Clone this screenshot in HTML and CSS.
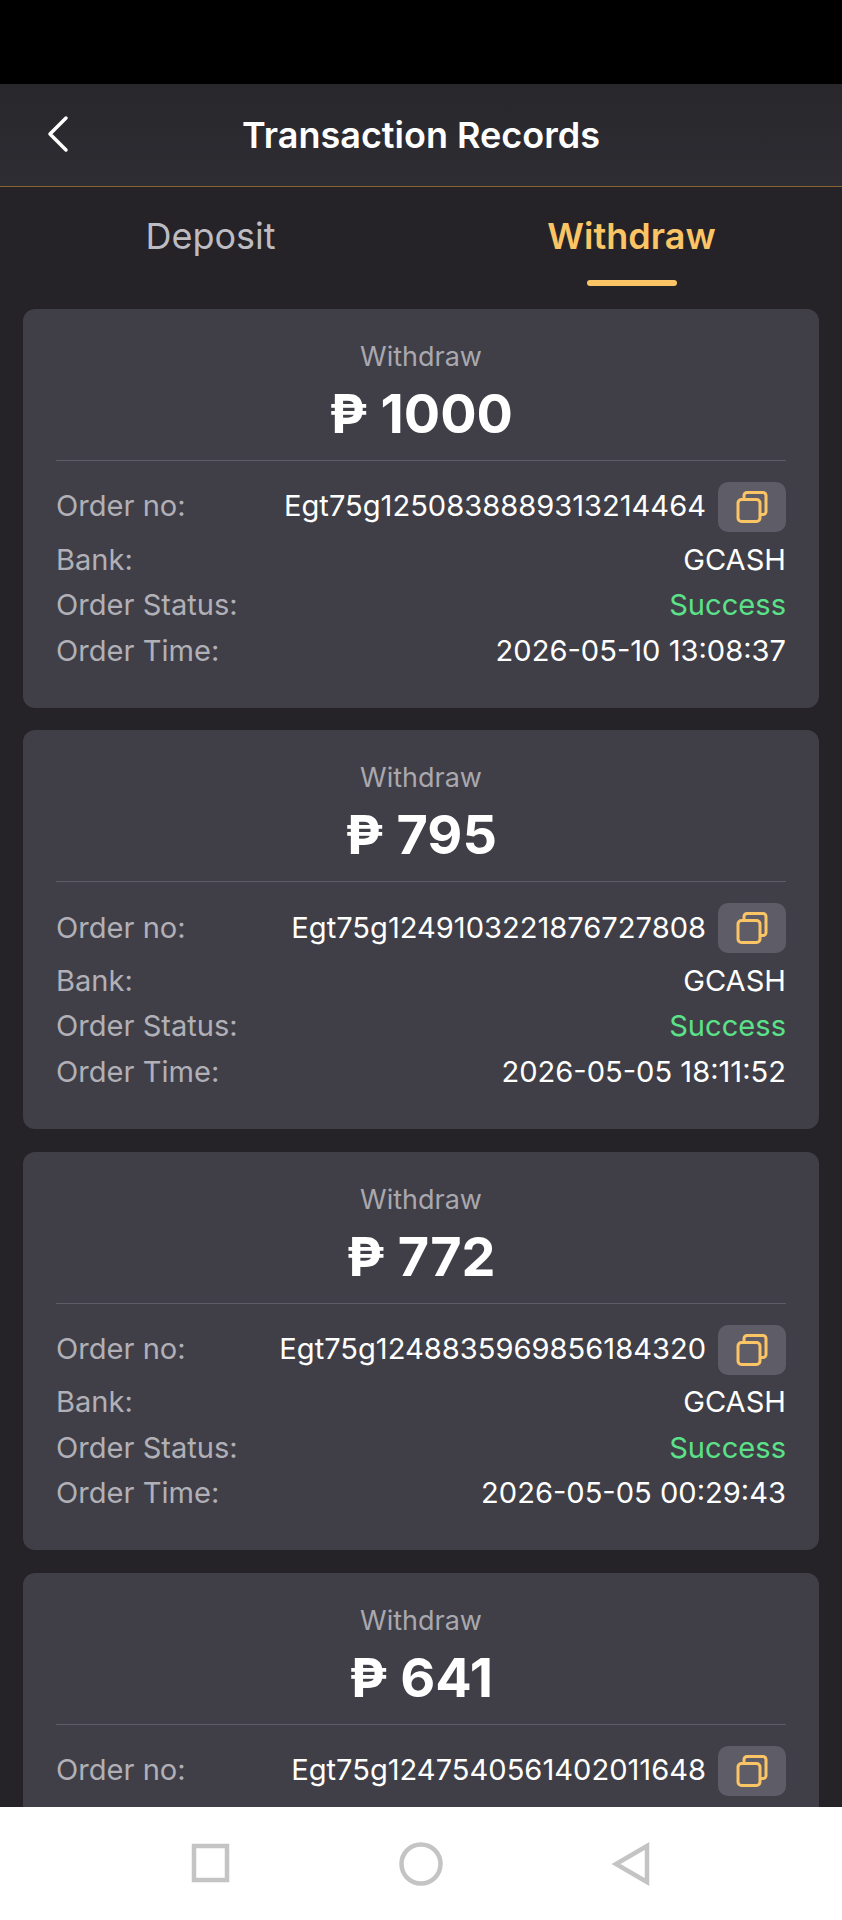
FILE: index.html
```html
<!DOCTYPE html>
<html lang="en">
<head>
<meta charset="utf-8">
<title>Transaction Records</title>
<link rel="stylesheet" href="styles.css">
</head>
<body>
<div class="status"></div>
<header class="header">
  <svg class="back" viewBox="0 0 24 40" width="24" height="40"><path d="M20 4 4 20l16 16" /></svg>
  <h1 class="title">Transaction Records</h1>
</header>
<nav class="tabs">
  <div class="tab">Deposit</div>
  <div class="tab tab-active">Withdraw</div>
</nav>
<main class="list">
  <section class="card">
    <div class="kind">Withdraw</div>
    <div class="amount">₱ 1000</div>
    <div class="row row-first"><span class="label">Order no:</span><span class="order"><span class="value">Egt75g1250838889313214464</span><button class="copy"><svg class="copy-icon" viewBox="0 0 36 36" width="36" height="36"><path d="M10 10.500V6.500a3 3 0 0 1 3-3h16a3 3 0 0 1 3 3v16a3 3 0 0 1-3 3h-3"/><rect x="4" y="10.500" width="22" height="22" rx="3.500"/></svg></button></span></div>
    <div class="row"><span class="label">Bank:</span><span class="value">GCASH</span></div>
    <div class="row"><span class="label">Order Status:</span><span class="success">Success</span></div>
    <div class="row"><span class="label">Order Time:</span><span class="value">2026-05-10 13:08:37</span></div>
  </section>
  <section class="card">
    <div class="kind">Withdraw</div>
    <div class="amount">₱ 795</div>
    <div class="row row-first"><span class="label">Order no:</span><span class="order"><span class="value">Egt75g1249103221876727808</span><button class="copy"><svg class="copy-icon" viewBox="0 0 36 36" width="36" height="36"><path d="M10 10.500V6.500a3 3 0 0 1 3-3h16a3 3 0 0 1 3 3v16a3 3 0 0 1-3 3h-3"/><rect x="4" y="10.500" width="22" height="22" rx="3.500"/></svg></button></span></div>
    <div class="row"><span class="label">Bank:</span><span class="value">GCASH</span></div>
    <div class="row"><span class="label">Order Status:</span><span class="success">Success</span></div>
    <div class="row"><span class="label">Order Time:</span><span class="value">2026-05-05 18:11:52</span></div>
  </section>
  <section class="card">
    <div class="kind">Withdraw</div>
    <div class="amount">₱ 772</div>
    <div class="row row-first"><span class="label">Order no:</span><span class="order"><span class="value">Egt75g1248835969856184320</span><button class="copy"><svg class="copy-icon" viewBox="0 0 36 36" width="36" height="36"><path d="M10 10.500V6.500a3 3 0 0 1 3-3h16a3 3 0 0 1 3 3v16a3 3 0 0 1-3 3h-3"/><rect x="4" y="10.500" width="22" height="22" rx="3.500"/></svg></button></span></div>
    <div class="row"><span class="label">Bank:</span><span class="value">GCASH</span></div>
    <div class="row"><span class="label">Order Status:</span><span class="success">Success</span></div>
    <div class="row"><span class="label">Order Time:</span><span class="value">2026-05-05 00:29:43</span></div>
  </section>
  <section class="card">
    <div class="kind">Withdraw</div>
    <div class="amount">₱ 641</div>
    <div class="row row-first"><span class="label">Order no:</span><span class="order"><span class="value">Egt75g1247540561402011648</span><button class="copy"><svg class="copy-icon" viewBox="0 0 36 36" width="36" height="36"><path d="M10 10.500V6.500a3 3 0 0 1 3-3h16a3 3 0 0 1 3 3v16a3 3 0 0 1-3 3h-3"/><rect x="4" y="10.500" width="22" height="22" rx="3.500"/></svg></button></span></div>
  </section>
</main>
<footer class="navbar">
  <svg class="nav-icon" viewBox="0 0 40 44" width="40" height="44"><rect x="3" y="4" width="33" height="34"/></svg>
  <svg class="nav-icon" viewBox="0 0 44 44" width="44" height="44"><circle cx="22" cy="22" r="19.500"/></svg>
  <svg class="nav-icon" viewBox="0 0 40 44" width="40" height="44"><path d="M36 4 5 22l31 18z"/></svg>
</footer>
</body>
</html>
```
FILE: styles.css
```css
* { box-sizing: border-box; }
html, body { margin: 0; padding: 0; }
body {
  width: 842px;
  height: 1920px;
  overflow: hidden;
  display: flex;
  flex-direction: column;
  background: #252328;
  font-family: Inter, "Noto Sans", sans-serif;
  color: #fff;
}
.status { height: 84px; background: #000; flex: none; }
.header {
  flex: none;
  height: 103px;
  display: flex;
  align-items: center;
  justify-content: center;
  position: relative;
  background: linear-gradient(#28272c, #2e2d33);
  border-bottom: 1px solid #8a6430;
}
.back { position: absolute; left: 46px; top: 30px; fill: none; stroke: #fff; stroke-width: 3.5; stroke-linecap: round; stroke-linejoin: round; }
.title { margin: 0; font-size: 36px; font-weight: 600; line-height: 40px; }
.tabs { flex: none; height: 122px; display: grid; grid-template-columns: 1fr 1fr; }
.tab {
  display: flex;
  justify-content: center;
  padding-top: 28px;
  font-size: 36px;
  line-height: 42px;
  color: #bdbcc2;
  position: relative;
}
.tab-active { color: #fbc566; font-weight: 600; }
.tab-active::after {
  content: "";
  position: absolute;
  left: 166px;
  top: 93px;
  width: 90px;
  height: 6px;
  border-radius: 3px;
  background: #fbc566;
}
.list {
  flex: 1;
  min-height: 0;
  overflow: hidden;
  display: flex;
  flex-direction: column;
  gap: 22.800px;
  padding: 0 23px;
}
.card {
  flex: none;
  padding: 32px 33px 34.500px;
  background: #403f47;
  border-radius: 12px;
}
.kind { text-align: center; font-size: 27px; line-height: 32px; color: #a9a8af; }
.amount {
  text-align: center;
  font-size: 54px;
  font-weight: 700;
  line-height: 64px;
  margin-top: 9px;
  padding-bottom: 14px;
  border-bottom: 1px solid #5e5d67;
}
.row {
  display: flex;
  justify-content: space-between;
  align-items: center;
  font-size: 29.100px;
  line-height: 45.500px;
}
.row-first { margin-top: 21px; margin-bottom: 4.500px; }
.row-first .label, .order .value { margin-bottom: 2px; }
.label { color: #b1b0b7; }
.value { color: #fff; }
.success { color: #5be288; }
.order { display: flex; align-items: center; gap: 12px; }
.copy {
  width: 68px;
  height: 50px;
  padding: 0;
  border: 0;
  border-radius: 10px;
  background: #5e5d67;
  display: flex;
  align-items: center;
  justify-content: center;
}
.copy-icon { fill: none; stroke: #fbc566; stroke-width: 3; }
.navbar {
  flex: none;
  height: 113px;
  background: #fff;
  display: grid;
  grid-template-columns: 40px 44px 40px;
  justify-content: space-between;
  align-items: center;
  padding: 0 191px 0 191px;
}
.nav-icon { fill: none; stroke: #c4c4c4; stroke-width: 4.500; }
```
